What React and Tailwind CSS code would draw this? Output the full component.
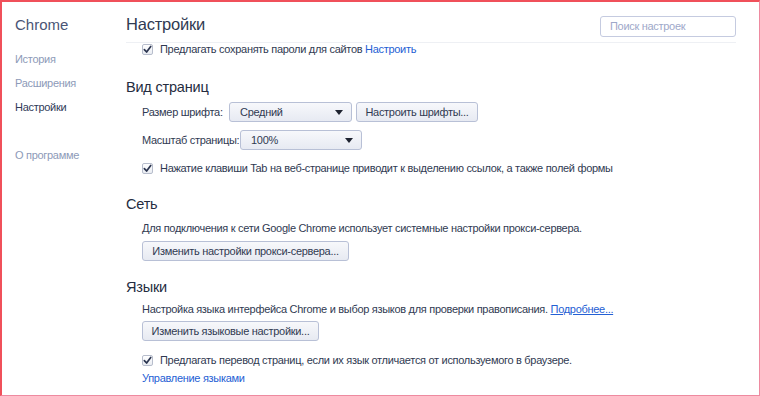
const font = { fontFamily: '"Liberation Sans", Arial, sans-serif' };

function Check() {
  return (
    <span className="flex h-[11px] w-[11px] shrink-0 items-center justify-center rounded-[2px] border border-[#b7bdcc] bg-gradient-to-b from-white to-[#e9ecf2]">
      <svg width="9" height="9" viewBox="0 0 10 10">
        <path d="M1.5 5.2 L4 7.8 L8.6 1.6" fill="none" stroke="#2b3550" strokeWidth="1.9" strokeLinecap="round" strokeLinejoin="round" />
      </svg>
    </span>
  );
}

function Select({ value, className }) {
  return (
    <div className={`flex h-[20px] items-center justify-between rounded-[3px] border border-[#b8c0d6] bg-gradient-to-b from-[#f7f8fb] to-[#e7eaf2] pl-[10px] pr-[8px] text-[#303a52] ${className}`}>
      <span>{value}</span>
      <svg width="8" height="5" viewBox="0 0 8 5">
        <path d="M0 0 H8 L4 5 Z" fill="#1e2330" />
      </svg>
    </div>
  );
}

function Button({ children, className }) {
  return (
    <div className={`flex h-[20px] items-center justify-center rounded-[3px] border border-[#b8c0d6] bg-gradient-to-b from-[#f7f8fb] to-[#e7eaf2] text-[#303a52] ${className}`}>
      {children}
    </div>
  );
}

export default function App() {
  return (
    <div
      style={font}
      className="flex h-[396px] w-[760px] overflow-hidden border-t-2 border-l-2 border-r border-b border-t-[#f0505a] border-l-[#f0505a] border-r-[#ee8aa0] border-b-[#ee8aa0] bg-white text-[11px] tracking-[-0.3px] text-[#303a52]"
    >
      {/* Sidebar */}
      <aside className="flex w-[124px] shrink-0 flex-col pl-[13px]">
        <div className="mt-[13px] text-[15px] leading-[20px] tracking-[0px] text-[#4a5575]">Chrome</div>
        <nav className="mt-[17px] flex flex-col text-[11px]">
          <span className="h-[24px] leading-[14px] text-[#8d9ab8]">История</span>
          <span className="h-[24px] leading-[14px] text-[#8d9ab8]">Расширения</span>
          <span className="h-[48px] leading-[14px] text-[#2f3a58]">Настройки</span>
          <span className="leading-[14px] text-[#8d9ab8]">О программе</span>
        </nav>
      </aside>

      {/* Main */}
      <main className="flex flex-1 flex-col pr-[23px]">
        <header className="flex h-[41px] shrink-0 items-start justify-between border-b border-[#eef0f4]">
          <h1 className="mt-[12px] text-[16.5px] leading-[20px] tracking-[-0.2px] text-[#303a52]">Настройки</h1>
          <div className="mt-[14px] flex h-[21px] w-[136px] items-center rounded-[3px] border border-[#c5cbe0] px-[9px] text-[#9ea8c9]">
            Поиск настроек
          </div>
        </header>

        <div className="flex flex-col">
          <div className="flex h-[12px] items-center gap-[7px] pl-[16px]">
            <Check />
            <span>
              Предлагать сохранять пароли для сайтов <span className="text-[#2460d4]">Настроить</span>
            </span>
          </div>

          <h2 className="mt-[23px] flex h-[20px] items-center text-[14.5px] tracking-[-0.2px] text-[#252c40]">Вид страниц</h2>

          <div className="mt-[4px] flex h-[20px] items-center whitespace-nowrap pl-[16px]">
            <span className="w-[87px]">Размер шрифта:</span>
            <Select value="Средний" className="w-[123px]" />
            <Button className="ml-[4px] w-[122px]">Настроить шрифты...</Button>
          </div>

          <div className="mt-[8px] flex h-[20px] items-center whitespace-nowrap pl-[16px]">
            <span className="w-[98px]">Масштаб страницы:</span>
            <Select value="100%" className="w-[122px]" />
          </div>

          <div className="mt-[11px] flex h-[14px] items-center gap-[7px] pl-[16px]">
            <Check />
            <span>Нажатие клавиши Tab на веб-странице приводит к выделению ссылок, а также полей формы</span>
          </div>

          <h2 className="mt-[20px] flex h-[20px] items-center text-[14.5px] tracking-[-0.2px] text-[#252c40]">Сеть</h2>

          <p className="mt-[6px] flex h-[14px] items-center pl-[16px]">
            Для подключения к сети Google Chrome использует системные настройки прокси-сервера.
          </p>

          <div className="mt-[6px] pl-[16px]">
            <Button className="w-[207px]">Изменить настройки прокси-сервера...</Button>
          </div>

          <h2 className="mt-[17px] flex h-[20px] items-center text-[14.5px] tracking-[-0.2px] text-[#252c40]">Языки</h2>

          <p className="mt-[4px] flex h-[14px] items-center pl-[16px]">
            Настройка языка интерфейса Chrome и выбор языков для проверки правописания.&nbsp;
            <span className="text-[#2460d4] underline">Подробнее...</span>
          </p>

          <div className="mt-[5px] pl-[16px]">
            <Button className="w-[177px]">Изменить языковые настройки...</Button>
          </div>

          <div className="mt-[12px] flex h-[14px] items-center gap-[7px] pl-[16px]">
            <Check />
            <span>Предлагать перевод страниц, если их язык отличается от используемого в браузере.</span>
          </div>

          <div className="mt-[4px] flex h-[14px] items-center pl-[16px] text-[#2460d4]">Управление языками</div>
        </div>
      </main>
    </div>
  );
}
